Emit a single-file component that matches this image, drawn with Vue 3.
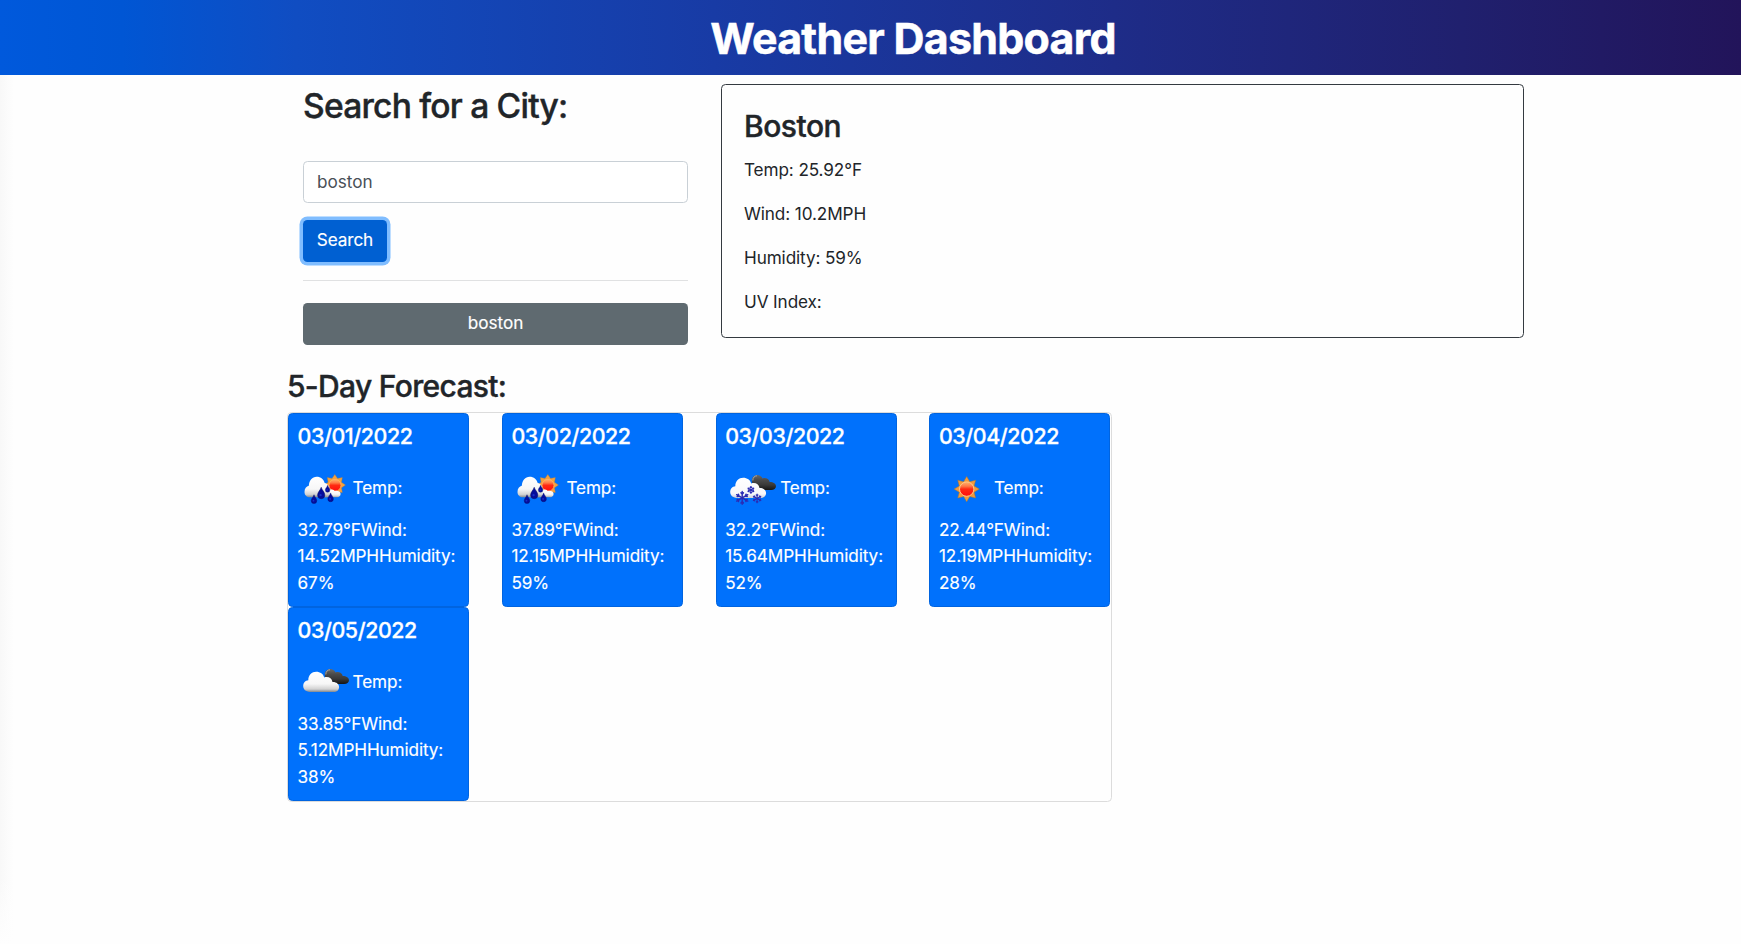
<script setup>
import { ref } from 'vue'

const city = ref('boston')
const history = ['boston']

const current = {
  name: 'Boston',
  stats: ['Temp: 25.92°F', 'Wind: 10.2MPH', 'Humidity: 59%', 'UV Index:'],
}

const days = [
  { date: '03/01/2022', icon: 'rain', lines: ['32.79°FWind:', '14.52MPHHumidity:', '67%'] },
  { date: '03/02/2022', icon: 'rain', lines: ['37.89°FWind:', '12.15MPHHumidity:', '59%'] },
  { date: '03/03/2022', icon: 'snow', lines: ['32.2°FWind:', '15.64MPHHumidity:', '52%'] },
  { date: '03/04/2022', icon: 'clear', lines: ['22.44°FWind:', '12.19MPHHumidity:', '28%'] },
  { date: '03/05/2022', icon: 'clouds', lines: ['33.85°FWind:', '5.12MPHHumidity:', '38%'] },
]

// Star outline with eight points around a centre
function star(cx, cy, outer, inner) {
  const pts = []
  for (let i = 0; i < 16; i++) {
    const r = i % 2 ? inner : outer
    const a = (Math.PI / 8) * i - Math.PI / 2
    pts.push(`${(cx + r * Math.cos(a)).toFixed(2)},${(cy + r * Math.sin(a)).toFixed(2)}`)
  }
  return pts.join(' ')
}

const flakes = [
  { x: 17, y: 36.4, r: 6.4, w: 1.4 },
  { x: 25.7, y: 28.4, r: 3.3, w: 1.2 },
  { x: 31.9, y: 36.9, r: 4.3, w: 1.1 },
]

const drops = [
  { x: 15.8, y: 34.6, s: 1 },
  { x: 23, y: 27.6, s: 1.3 },
  { x: 29.4, y: 24.8, s: 0.82 },
  { x: 32.4, y: 32.8, s: 1 },
]
</script>

<template>
  <div class="page">
    <svg class="defs" width="0" height="0" aria-hidden="true">
      <defs>
        <linearGradient id="gWhite" x1="0" y1="0" x2="0" y2="1">
          <stop offset="0" stop-color="#ffffff" />
          <stop offset="0.6" stop-color="#f7f7f7" />
          <stop offset="0.86" stop-color="#d2d2d2" />
          <stop offset="1" stop-color="#84898f" />
        </linearGradient>
        <linearGradient id="gSnow" x1="0" y1="0" x2="0" y2="1">
          <stop offset="0" stop-color="#ffffff" />
          <stop offset="0.8" stop-color="#f8f8fb" />
          <stop offset="1" stop-color="#cfd0da" />
        </linearGradient>
        <linearGradient id="gDark" x1="0" y1="0" x2="0" y2="1">
          <stop offset="0" stop-color="#6a6a6a" />
          <stop offset="0.35" stop-color="#4a4a4a" />
          <stop offset="0.65" stop-color="#3a3a3a" />
          <stop offset="1" stop-color="#151515" />
        </linearGradient>
        <linearGradient id="gSun" x1="0" y1="0" x2="0" y2="1">
          <stop offset="0" stop-color="#ffb36b" />
          <stop offset="0.3" stop-color="#ff7a45" />
          <stop offset="0.5" stop-color="#ff2a12" />
          <stop offset="1" stop-color="#ff0d0d" />
        </linearGradient>
      </defs>
    </svg>

    <header class="banner"><h1>Weather Dashboard</h1></header>

    <div class="shell">
      <section class="top">
        <div class="search">
          <h2>Search for a City:</h2>
          <input v-model="city" type="text" class="field" />
          <button class="go">Search</button>
          <hr />
          <button v-for="h in history" :key="h" class="past">{{ h }}</button>
        </div>
        <div class="current">
          <h3>{{ current.name }}</h3>
          <p v-for="s in current.stats" :key="s">{{ s }}</p>
        </div>
      </section>

      <h3 class="forecast-title">5-Day Forecast:</h3>
      <section class="forecast">
        <article v-for="d in days" :key="d.date" class="day">
          <h5>{{ d.date }}</h5>
          <div class="lead">
            <svg class="icon" viewBox="-0.2 -0.5 55 55">
              <g v-if="d.icon === 'clear'">
                <polygon :points="star(27.5, 27.6, 12.6, 8)" fill="#f39a3c" stroke="#a9792f" stroke-width="0.5" />
                <circle cx="27.5" cy="27.6" r="7.2" fill="url(#gSun)" stroke="#ffc98a" stroke-width="1" />
              </g>
              <g v-if="d.icon === 'rain'">
                <polygon :points="star(36.6, 23.6, 10.6, 7.2)" fill="#f5a03e" stroke="#b98436" stroke-width="0.4" />
                <circle cx="36.8" cy="23.8" r="6" fill="url(#gSun)" stroke="#ffb45c" stroke-width="0.8" />
                <path d="M27 35.6C25.6 33 27 29 30 28.6C31.5 27.6 35 27.6 36.6 29.4C40 29 42.4 30.2 42.4 32.4C42.4 34.6 40.5 35.8 38 35.8H27Z" fill="url(#gWhite)" />
                <path d="M12 35.8C8.4 35.8 6.3 33.5 6.3 30.4C6.3 27 8.2 24.8 10.6 24.3C11 19 14 15.3 18.4 15.3C22.6 15.3 25.6 17.8 26.5 21.6C29.5 22 31 25 31.4 28C32 32 31 35.8 27 35.8Z" fill="url(#gWhite)" />
                <g v-for="(p, i) in drops" :key="i" :transform="`translate(${p.x} ${p.y}) scale(${p.s})`">
                  <path d="M0 -1.4C0.5 0.6 2.8 2.4 2.8 4.6A2.8 2.8 0 0 1 -2.8 4.6C-2.8 2.4 -0.5 0.6 0 -1.4Z" fill="#050c9c" stroke="#06126a" stroke-width="0.4" />
                  <circle cx="-0.5" cy="4.6" r="0.9" fill="#1730c8" />
                </g>
              </g>
              <g v-if="d.icon === 'snow' || d.icon === 'clouds'">
                <path d="M34 28.5C30 27 26.6 23 26.6 19.2C26.6 15.7 29 13.5 31.8 13.5C34.4 13.5 36.4 14.8 37.4 17C40.4 15.8 43.8 17.4 44.5 20.4C48.2 20.4 50.8 22 50.8 24.8C50.8 27.2 48.6 28.5 46 28.5Z" fill="url(#gDark)" />
                <path d="M27.6 19C27.6 16 29.4 14.3 31.8 14.3" fill="none" stroke="#a4a4a4" stroke-width="1" />
                <path d="M11.5 36.4C7.6 36.4 5 34 5 30.6C5 27.2 7.2 25 10.1 24.7C10.1 19.6 13.6 16.3 18 16.3C22 16.3 25 18.5 26 22C29.8 20.6 33.6 22.4 34.3 26.4C38 26.2 40.9 28.4 40.9 31.4C40.9 34.4 38.6 36.4 35.5 36.4Z" :fill="d.icon === 'snow' ? 'url(#gSnow)' : 'url(#gWhite)'" />
              </g>
              <g v-if="d.icon === 'snow'" stroke="#2a2bb4" stroke-linecap="round">
                <g v-for="(f, i) in flakes" :key="i" :transform="`translate(${f.x} ${f.y})`" :stroke-width="f.w">
                  <g v-for="a in [0, 60, 120, 180, 240, 300]" :key="a" :transform="`rotate(${a})`">
                    <path :d="`M0 0V${-f.r}M${-f.r * 0.2} ${-f.r * 0.8}L0 ${-f.r * 0.58}L${f.r * 0.2} ${-f.r * 0.8}`" fill="none" />
                  </g>
                </g>
              </g>
            </svg>
            <span>Temp:</span>
          </div>
          <p v-for="l in d.lines" :key="l">{{ l }}</p>
        </article>
      </section>
    </div>
  </div>
</template>

<style>
body {
  margin: 0;
  background: #fefefe;
}
</style>

<style scoped>
.page {
  position: relative;
  box-sizing: border-box;
  height: 944px;
  overflow: hidden;
  color: #212529;
  background: #fefefe;
  font-family: Inter, "Liberation Sans", sans-serif;
  font-size: 17.15px;
  line-height: 26.5px;
  letter-spacing: -0.1px;
}
.page::before {
  content: "";
  position: absolute;
  left: 0;
  top: 75px;
  bottom: 0;
  width: 14px;
  background: linear-gradient(180deg, rgba(254, 254, 254, 0) 800px, #fefefe 869px),
    linear-gradient(90deg, #f8f8f8, #fefefe);
}
.defs { position: absolute; }
h1, h2, h3, h5, p { margin: 0; }
h2, h3 { -webkit-text-stroke: 0.4px currentColor; }

.banner {
  box-sizing: border-box;
  height: 75px;
  padding-left: 85px;
  text-align: center;
  background: linear-gradient(90deg, #0059dc 0%, #0056d4 7%, #104dc2 17%, #183ba5 41%, #1e2c88 64%, #20206e 84%, #22145a 100%);
}
.banner h1 {
  color: #fff;
  font-size: 42.9px;
  font-weight: 700;
  line-height: 53px;
  letter-spacing: -0.72px;
  padding-top: 12px;
  -webkit-text-stroke: 0.5px currentColor;
}

.shell {
  width: 1237px;
  margin-left: 287px;
}
.top {
  display: grid;
  grid-template-columns: 385px 803px;
  column-gap: 33px;
  padding: 9px 0 0 16px;
  align-items: start;
}
.search { display: flex; flex-direction: column; align-items: flex-start; }
.search h2 {
  font-size: 33.6px;
  font-weight: 500;
  line-height: 43px;
  letter-spacing: -0.78px;
  height: 77px;
}
.field {
  box-sizing: border-box;
  width: 100%;
  height: 42px;
  padding: 0 13px 1px;
  border: 1px solid #c9d0d6;
  border-radius: 4.5px;
  background: #fff;
  color: #495057;
  font: inherit;
  letter-spacing: 0;
  outline: none;
}
.go, .past {
  box-sizing: border-box;
  height: 42px;
  border: 0;
  border-radius: 4.5px;
  padding: 0 0 1px;
  color: #fff;
  font: inherit;
  letter-spacing: -0.1px;
  -webkit-text-stroke: 0.15px currentColor;
}
.go {
  width: 84px;
  margin-top: 17px;
  background: #0060d2;
  box-shadow: 0 0 0 3.5px #80bdff;
}
hr {
  width: 100%;
  height: 1px;
  margin: 18px 0 22px;
  border: 0;
  background: #e0e1e2;
}
.past {
  width: 100%;
  background: #5f6a70;
  letter-spacing: 0;
}

.current {
  box-sizing: border-box;
  height: 254px;
  border: 1px solid #343a40;
  border-radius: 4.5px;
  padding: 22px;
}
.current h3 {
  font-size: 30px;
  font-weight: 500;
  line-height: 38px;
  letter-spacing: -0.5px;
  margin-bottom: 3px;
}
.current p { line-height: 44px; }

.forecast-title {
  font-size: 30px;
  font-weight: 500;
  line-height: 38px;
  letter-spacing: -0.68px;
  margin: 22px 0 7px;
}
.forecast {
  box-sizing: border-box;
  display: grid;
  grid-template-columns: repeat(4, 181px);
  grid-auto-rows: 194px;
  column-gap: 32.8px;
  width: 825px;
  height: 390px;
  border: 1px solid #dcdcdc;
  border-radius: 4.5px;
}
.day {
  box-sizing: border-box;
  padding: 8.6px;
  border: 1px solid #0064e0;
  border-radius: 4.5px;
  background: #0071fc;
  color: #fff;
  -webkit-text-stroke: 0.15px currentColor;
}
.day h5 {
  font-size: 21.4px;
  font-weight: 500;
  line-height: 26.5px;
  letter-spacing: -0.42px;
  margin-bottom: 11.7px;
  -webkit-text-stroke: 0.3px currentColor;
}
.lead { display: flex; align-items: center; height: 55px; margin-bottom: 1px; }
.icon { width: 55px; height: 55px; flex: none; }
</style>
